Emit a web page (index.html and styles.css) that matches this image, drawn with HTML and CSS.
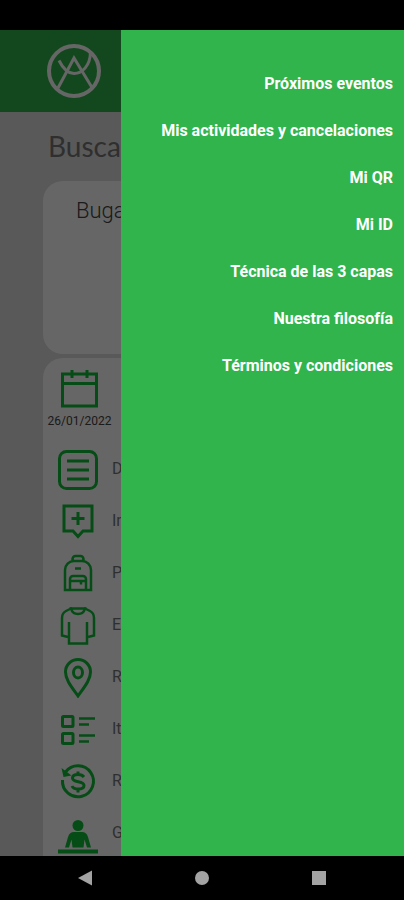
FILE: index.html
```html
<!DOCTYPE html>
<html lang="es">
<head>
  <meta charset="utf-8">
  <meta name="viewport" content="width=device-width, initial-scale=1">
  <title>Próximos eventos</title>
  <link rel="stylesheet" href="styles.css">
</head>
<body>
  <div class="status-bar"></div>

  <div class="screen">
    <div class="page">
      <header class="header">
        <svg class="logo" viewBox="0 0 56 56">
          <circle cx="28" cy="28" r="25" stroke-width="4"/>
          <path d="M12 45L28 15L46 44.500" stroke-width="3"/>
          <path d="M13 17.500C17 25.500 21.500 30.500 28 30.500C36.500 30.500 44 22.500 44.500 9.500" stroke-width="3"/>
        </svg>
      </header>

      <main class="content">
        <h1 class="title">Busca</h1>

        <section class="card event-card">
          <h2 class="event-name">Buga</h2>
        </section>

        <section class="card detail-card">
          <div class="date">
            <svg class="icon" viewBox="0 0 40 40">
              <path d="M2.500 5h34v32h-34zM2.500 14.500h34M12 1v8M27 1v8"/>
            </svg>
            <span>26/01/2022</span>
          </div>

          <ul class="details">
            <li>
              <svg class="icon" viewBox="0 0 40 40">
                <rect x="1.500" y="1.500" width="37" height="37" rx="7"/>
                <path d="M9 11h22M9 20h22M9 29h22"/>
              </svg>
              <span class="label">D</span>
            </li>
            <li>
              <svg class="icon" viewBox="0 0 40 40">
                <path d="M6 4h28v25h-9l-5 5.500l-5-5.500H6zM20 10v13M13.500 16.500h13"/>
              </svg>
              <span class="label">In</span>
            </li>
            <li>
              <svg class="icon thin" viewBox="0 0 40 40">
                <path d="M7 36V16a9 9 0 0 1 9-9h8a9 9 0 0 1 9 9v20zM14.500 7V5a3 3 0 0 1 3-3h5a3 3 0 0 1 3 3v2M17 14.500h6"/>
                <path d="M12 36V25a3 3 0 0 1 3-3h10a3 3 0 0 1 3 3v11M12 27h16M23 27v3.500"/>
              </svg>
              <span class="label">P</span>
            </li>
            <li>
              <svg class="icon thin" viewBox="0 0 40 40">
                <path d="M14 2L8 5C5 6.500 4 8.500 4 12v17.500l6 1.500M26 2l6 3c3 1.500 4 3.500 4 7v17.500l-6 1.500"/>
                <path d="M11 16v21.500h18V16M13 2.500h14c-1 4-3 5.500-7 5.500s-6-1.500-7-5.500z"/>
              </svg>
              <span class="label">Eq</span>
            </li>
            <li>
              <svg class="icon" viewBox="0 0 40 40">
                <path d="M20 38C14 29.500 7.500 22 7.500 14a12.500 12.500 0 0 1 25 0C32.500 22 26 29.500 20 38z"/>
                <ellipse cx="20" cy="14.500" rx="4.500" ry="5.500"/>
              </svg>
              <span class="label">R</span>
            </li>
            <li>
              <svg class="icon" viewBox="0 0 40 40">
                <rect x="4.500" y="6.500" width="10.500" height="10" rx="1"/>
                <rect x="4.500" y="23.500" width="10.500" height="10" rx="1"/>
                <path d="M21 8.500h16M21 14.500h10M21 25.500h16M21 31.500h10" stroke-width="2.500"/>
              </svg>
              <span class="label">It</span>
            </li>
            <li>
              <svg class="icon" viewBox="0 0 40 40">
                <path d="M7.500 10A15.500 15.500 0 1 1 4.500 18"/>
                <path class="solid" d="M3.500 6l2 9l8-1.500z"/>
                <path d="M26 15c-1.500-2-3.500-2.500-6-2.500c-3 0-5.500 1-5.500 3.500c0 5.500 11.500 2 11.500 7.500c0 2.500-2.500 3.500-6 3.500c-2.500 0-5-.800-6-3M20 9.500v3M20 27.500v3"/>
              </svg>
              <span class="label">R</span>
            </li>
            <li>
              <svg class="icon" viewBox="0 0 40 40">
                <circle class="solid" cx="20" cy="11.500" r="5.500"/>
                <path class="solid" d="M7 33.500l3-10.500c1-3.500 3-5 6-5h8c3 0 5 1.500 6 5l3 10.500h-4l-2.500-8l-1 8h-11l-1-8l-2.500 8z"/>
                <path class="solid" d="M0 35.500h40v4H0z"/>
              </svg>
              <span class="label">G</span>
            </li>
          </ul>
        </section>
      </main>
    </div>

    <div class="scrim"></div>

    <nav class="drawer">
      <a href="#eventos">Próximos eventos</a>
      <a href="#actividades">Mis actividades y cancelaciones</a>
      <a href="#qr">Mi QR</a>
      <a href="#id">Mi ID</a>
      <a href="#capas">Técnica de las 3 capas</a>
      <a href="#filosofia">Nuestra filosofía</a>
      <a href="#terminos">Términos y condiciones</a>
    </nav>
  </div>

  <div class="nav-bar">
    <button type="button" aria-label="Atrás">
      <svg viewBox="0 0 16 16"><path d="M1 8L15 .500v15z"/></svg>
    </button>
    <button type="button" aria-label="Inicio">
      <svg viewBox="0 0 16 16"><circle cx="8" cy="8" r="7"/></svg>
    </button>
    <button type="button" aria-label="Recientes">
      <svg viewBox="0 0 16 16"><rect x="1" y="1" width="14" height="14"/></svg>
    </button>
  </div>
</body>
</html>
```

FILE: styles.css
```css
:root {
  --primary-color: #30b44b;
  --icon-color: #10be38;
  --text-color: #444;
  --text-light: #777;
  --bg-color: #dedede;
  --card-color: #fff;
  --system-color: #000;
  --radius: 20px;
}

* {
  margin: 0;
  padding: 0;
  box-sizing: border-box;
}

body {
  display: flex;
  flex-direction: column;
  height: 100vh;
  font-family: Roboto, sans-serif;
  color: var(--text-color);
  background-color: var(--system-color);
}

.status-bar {
  height: 30px;
}

.screen {
  position: relative;
  flex: 1;
  min-height: 0;
  overflow: hidden;
}

.page {
  height: 100%;
  overflow: hidden;
  background-color: var(--bg-color);
}

.header {
  display: flex;
  align-items: center;
  height: 82px;
  padding: 0 46px;
  background-color: var(--primary-color);
}

.logo {
  width: 56px;
  height: 56px;
  fill: none;
  stroke: #fff;
}

.content {
  padding: 16px 43px 0;
}

.title {
  padding-left: 5px;
  margin-bottom: 17px;
  font-family: Lato, sans-serif;
  font-size: 28px;
  font-weight: 400;
  line-height: 36px;
  color: var(--text-light);
}

.card {
  background-color: var(--card-color);
  border-radius: var(--radius);
}

.event-card {
  height: 173px;
  padding: 16px 33px;
  margin-bottom: 4px;
}

.event-name {
  font-size: 22px;
  font-weight: 300;
  line-height: 28px;
}

.detail-card {
  padding: 11px 4px 20px;
}

.date {
  display: flex;
  flex-direction: column;
  align-items: center;
  width: 65px;
  font-size: 12px;
  line-height: 24px;
}

.details {
  padding: 11px 11px 0;
  list-style: none;
}

.details li {
  display: flex;
  align-items: center;
  gap: 14px;
  height: 52px;
}

.icon {
  flex: none;
  width: 40px;
  height: 40px;
  fill: none;
  stroke: var(--icon-color);
  stroke-width: 3;
}

.icon.thin {
  stroke-width: 2.5;
}

.icon .solid {
  fill: var(--icon-color);
  stroke: none;
}

.label {
  padding-bottom: 4px;
  font-size: 16px;
  color: var(--text-light);
}

.scrim {
  position: absolute;
  inset: 0;
  background-color: rgba(0, 0, 0, 0.6);
}

.drawer {
  position: absolute;
  top: 0;
  right: 0;
  bottom: 0;
  display: flex;
  flex-direction: column;
  align-items: flex-end;
  gap: 27px;
  width: 70%;
  padding: 44px 11px;
  background-color: var(--primary-color);
}

.drawer a {
  font-size: 16px;
  font-weight: 700;
  line-height: 20px;
  color: #fff;
  text-decoration: none;
}

.nav-bar {
  display: flex;
  height: 44px;
  padding: 0 26px;
}

.nav-bar button {
  display: flex;
  flex: 1;
  align-items: center;
  justify-content: center;
  border: none;
  background: none;
  cursor: pointer;
}

.nav-bar svg {
  width: 16px;
  height: 16px;
  fill: #a3a3a3;
}
```
